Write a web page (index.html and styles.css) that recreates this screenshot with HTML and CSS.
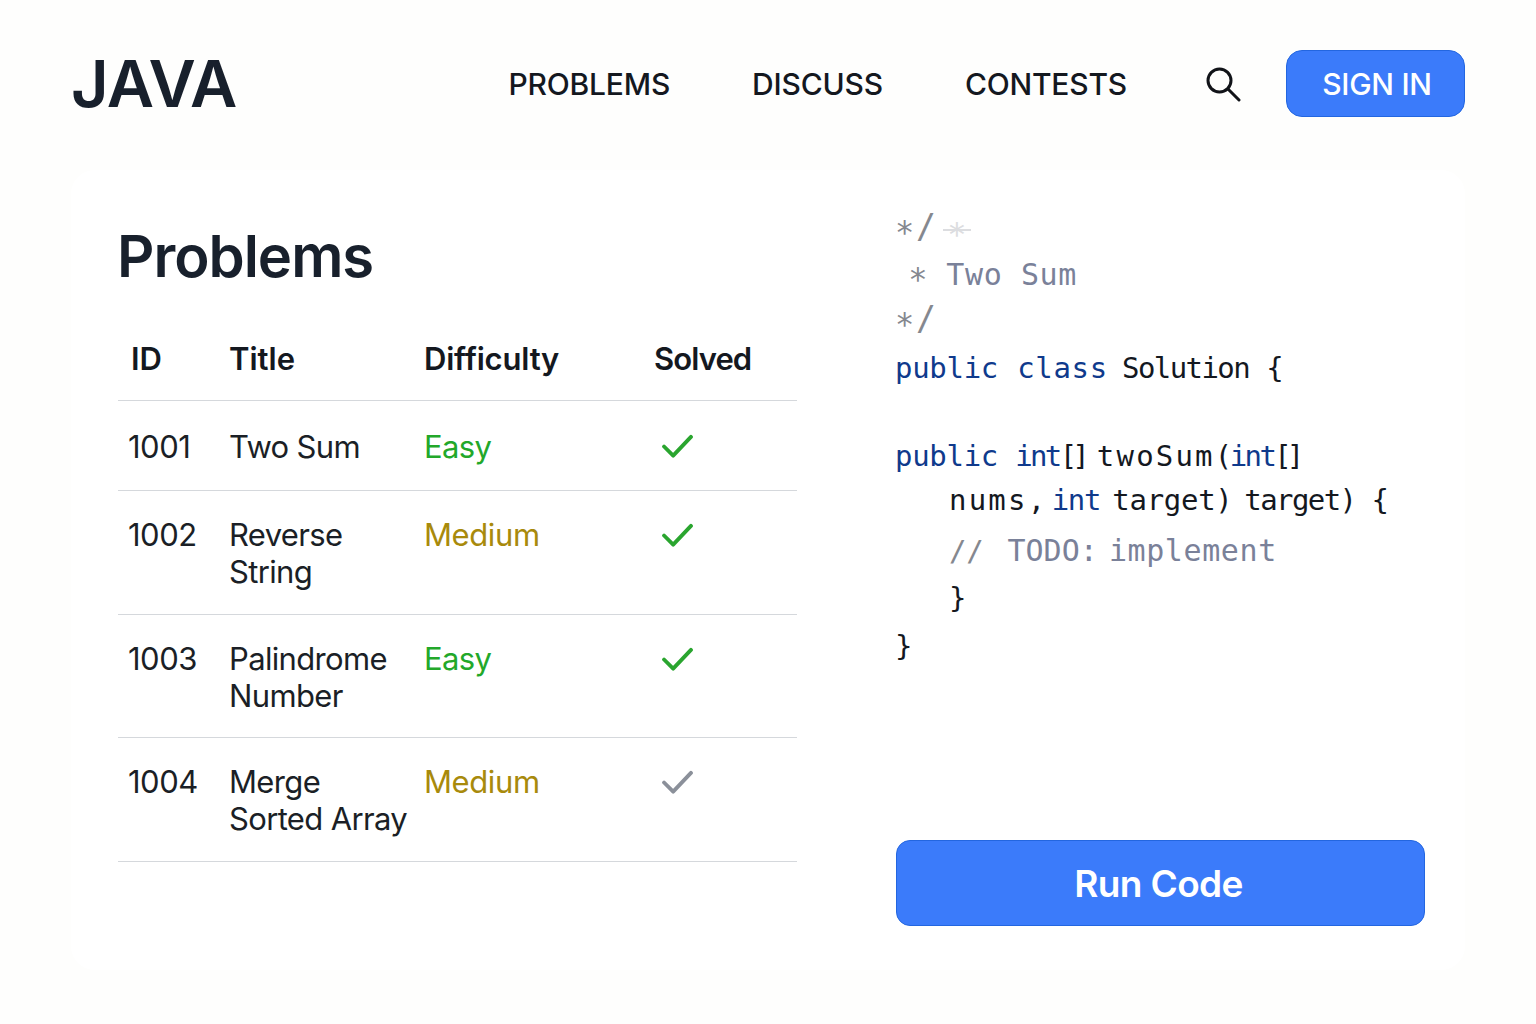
FILE: index.html
```html
<!DOCTYPE html>
<html lang="en">
<head>
<meta charset="utf-8">
<title>JAVA</title>
<link rel="stylesheet" href="styles.css">
</head>
<body>
<div class="page">
  <header class="header">
    <div class="logo">JAVA</div>
    <nav class="nav">
      <a class="nav-link">PROBLEMS</a>
      <a class="nav-link">DISCUSS</a>
      <a class="nav-link">CONTESTS</a>
    </nav>
    <svg class="search" width="36" height="36" viewBox="0 0 36 36" fill="none" stroke="#111318" stroke-width="3" stroke-linecap="round"><circle cx="14.5" cy="14.5" r="11.5"/><path d="M23 23l11 11"/></svg>
    <button class="signin">SIGN IN</button>
  </header>
  <main class="main">
    <section class="problems">
      <h1 class="title">Problems</h1>
      <table class="table">
        <thead>
          <tr><th class="col-id">ID</th><th class="col-title">Title</th><th class="col-diff">Difficulty</th><th class="col-solved">Solved</th></tr>
        </thead>
        <tbody>
          <tr class="row-single"><td>1001</td><td class="name">Two Sum</td><td class="easy">Easy</td><td><svg class="check" viewBox="0 0 32 26" fill="none" stroke="#2aa52f" stroke-width="4" stroke-linecap="round" stroke-linejoin="round"><path d="M2 13l9.500 9.500L30 3"/></svg></td></tr>
          <tr><td>1002</td><td class="name">Reverse<br>String</td><td class="medium">Medium</td><td><svg class="check" viewBox="0 0 32 26" fill="none" stroke="#2aa52f" stroke-width="4" stroke-linecap="round" stroke-linejoin="round"><path d="M2 13l9.500 9.500L30 3"/></svg></td></tr>
          <tr class="row-short"><td>1003</td><td class="name">Palindrome<br>Number</td><td class="easy">Easy</td><td><svg class="check" viewBox="0 0 32 26" fill="none" stroke="#2aa52f" stroke-width="4" stroke-linecap="round" stroke-linejoin="round"><path d="M2 13l9.500 9.500L30 3"/></svg></td></tr>
          <tr><td>1004</td><td class="name">Merge<br>Sorted Array</td><td class="medium">Medium</td><td><svg class="check" viewBox="0 0 32 26" fill="none" stroke="#8b909a" stroke-width="4" stroke-linecap="round" stroke-linejoin="round"><path d="M2 13l9.500 9.500L30 3"/></svg></td></tr>
        </tbody>
      </table>
    </section>
    <section class="editor">
      <pre class="code"><span class="line"><span class="punct"><span class="star">*</span><span class="slash">/</span></span> <span class="faint"><span class="star">*</span></span></span><span class="line l2"><span class="punct lead"> <span class="star">*</span></span> <span class="cmt push-small">Two Sum</span></span><span class="line"><span class="punct"><span class="star">*</span><span class="slash">/</span></span></span><span class="line l4"><span class="kw spaced">public <span class="open">class</span></span> <span class="narrow pull-small">Solution</span> {</span><span class="line l5"><span class="kw">public <span class="tight">int</span></span><span class="tighter">[]</span> <span class="wide pull">twoSum</span><span class="tight">(</span><span class="kw tight">int</span><span class="tighter">[]</span></span><span class="line indent"><span class="wide">nums</span><span class="tight">,</span> <span class="kw mid pull-more">int</span> <span class="pull">target</span><span class="tight">)</span> <span class="narrow pull-small">target</span><span class="tight">)</span> {</span><span class="line indent l7"><span class="punct">//</span> <span class="cmt push"><span class="even">TODO</span><span class="colon">: </span>implement</span></span><span class="line indent l8">}</span><span class="line l9">}</span></pre>
      <button class="run">Run Code</button>
    </section>
  </main>
</div>
</body>
</html>
```
FILE: styles.css
```css
* { box-sizing: border-box; }
html, body { margin: 0; }
body {
  background: #fefefd;
  color: #14181f;
  font-family: Inter, "Liberation Sans", sans-serif;
}
.page {
  width: 1536px;
  height: 1024px;
  padding: 50px 71px 0 71px;
}
.header {
  display: flex;
  align-items: center;
  height: 67px;
}
.logo {
  font-size: 65px;
  font-weight: 600;
  letter-spacing: -0.7px;
  color: #18202c;
  line-height: 67px;
  margin-right: auto;
}
.nav { display: flex; gap: 82px; margin-right: 78px; }
.nav-link {
  font-size: 30px;
  font-weight: 500;
  color: #14181f;
  letter-spacing: -0.2px;
}
.search { margin-right: 45px; display: block; }
.signin {
  width: 179px;
  height: 67px;
  padding: 0 0 0 3px;
  border: 1.5px solid #2366e0;
  border-radius: 16px;
  background: #3b7bfa;
  color: #fff;
  font: 500 30px Inter, "Liberation Sans", sans-serif;
  letter-spacing: -0.3px;
}
.main {
  display: flex;
  height: 800px;
  margin-top: 53px;
  padding: 35px 0 0 47px;
  background: #fff;
  border-radius: 24px;
}
.problems { width: 679px; }
.title {
  margin: 12px 0 0 -1px;
  font-size: 58px;
  font-weight: 600;
  line-height: 78px;
  letter-spacing: -1px;
  color: #18202c;
}
.table {
  width: 679px;
  margin-top: 21px;
  border-collapse: collapse;
  table-layout: fixed;
  font-size: 31px;
}
.col-id { width: 111px; padding-left: 13px; }
.col-title { width: 195px; }
.col-diff { width: 230px; letter-spacing: -0.2px; }
.col-solved { width: 143px; letter-spacing: -0.9px; }
th {
  text-align: left;
  font-weight: 600;
  font-size: 31px;
  height: 84px;
  padding: 2px 0 0;
  border-bottom: 1.5px solid #d5d8dc;
}
td {
  vertical-align: top;
  padding: 25px 0 24px;
  line-height: 37px;
  border-bottom: 1.5px solid #d5d8dc;
  letter-spacing: -0.5px;
  color: #1b1f26;
}
td:first-child { padding-left: 10px; }
.name { letter-spacing: -0.65px; }
.row-single td { padding: 27px 0 25px; }
.row-single td:first-child { padding-left: 10px; }
.row-short td { padding-bottom: 23px; }
.easy { color: #22a82a; letter-spacing: -0.65px; }
.medium { color: #a88a0c; letter-spacing: -0.4px; }
.check { width: 31px; height: 25px; display: block; margin: 7px 0 0 8px; }
.row-single .check { margin-top: 6px; }
.editor {
  margin-left: 99px;
  width: 529px;
  display: flex;
  flex-direction: column;
}
.code {
  margin: 0 0 0 -1px;
  height: 635px;
  font-family: "DejaVu Sans Mono", "Liberation Mono", monospace;
  font-size: 29px;
  letter-spacing: -0.3px;
  color: #14181f;
}
.line { display: block; height: 44px; line-height: 44px; white-space: pre; }
.l2 { margin-top: 4px; }
.l4 { margin-top: 5px; }
.l5 { margin-top: 44px; }
.l7 { margin-top: 7px; }
.l8 { margin-top: 3px; }
.l9 { margin-top: 4px; }
.indent { padding-left: 54px; }
.tight { letter-spacing: -2.6px; }
.tighter { letter-spacing: -5px; }
.wide { letter-spacing: 2.2px; }
.narrow { letter-spacing: -1.6px; }
.open { letter-spacing: 0.7px; }
.mid { letter-spacing: -1.3px; }
.even { letter-spacing: 0; }
.spaced { word-spacing: 2px; }
.pull { margin-left: -5px; }
.pull-small { margin-left: -3px; }
.pull-more { margin-left: -8px; }
.push { margin-left: 7px; }
.push-small { margin-left: 2px; }
.lead { margin-left: -4px; }
.colon { letter-spacing: -3.5px; }
.kw { color: #0f3a8c; }
.cmt { color: #7a8199; font-size: 30px; letter-spacing: 0.6px; }
.punct { color: #85888f; }
.faint {
  display: inline-block;
  width: 28px;
  height: 24px;
  margin-left: -10px;
  line-height: 24px;
  text-align: center;
  color: #dcdde0;
  vertical-align: -2px;
  background: linear-gradient(#dcdde0, #dcdde0) center / 100% 2px no-repeat;
}
.slash { font-size: 33px; margin-left: 2px; }
.star { font-size: 32px; vertical-align: -5px; line-height: 0; }
.run {
  width: 529px;
  height: 86px;
  padding: 0 4px 0 0;
  border: 1.5px solid #2366e0;
  border-radius: 14px;
  background: #3b7bfa;
  color: #fff;
  font: 600 37px Inter, "Liberation Sans", sans-serif;
  letter-spacing: -0.6px;
}
```
